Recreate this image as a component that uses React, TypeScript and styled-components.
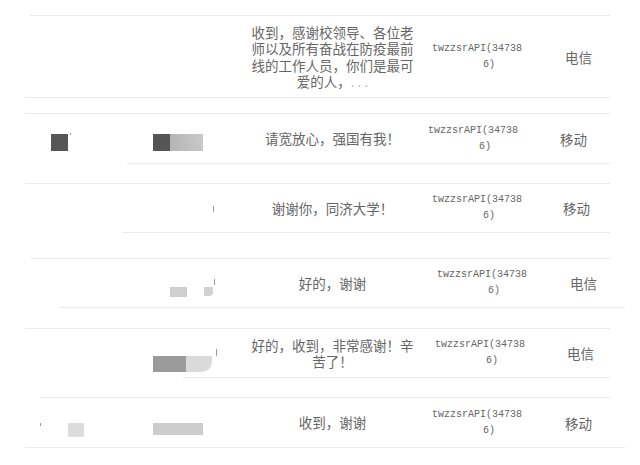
import React from 'react';
import styled, { createGlobalStyle } from 'styled-components';

const GlobalStyle = createGlobalStyle`
  html, body {
    margin: 0;
    padding: 0;
    background: #ffffff;
  }
  body {
    font-family: "Noto Sans CJK SC", "Noto Sans", sans-serif;
  }
`;

const Sheet = styled.div`
  width: 640px;
  height: 465px;
  padding-top: 15px;
  box-sizing: border-box;
  display: flex;
  flex-direction: column;
  overflow: hidden;
  background: #fff;
`;

const Rule = styled.div<{ $from: number; $to?: number }>`
  flex: none;
  height: 1px;
  background: #eaeaea;
  margin-left: ${p => p.$from}px;
  width: ${p => (p.$to ?? 610) - p.$from}px;
`;

const Gap = styled.div<{ $h: number }>`
  flex: none;
  height: ${p => p.$h}px;
`;

const Row = styled.div<{ $h: number }>`
  flex: none;
  height: ${p => p.$h}px;
  display: grid;
  grid-template-columns: 140px 100px 185px 120px 1fr;
  align-items: center;
`;

const MarkCell = styled.div<{ $pad: number }>`
  display: flex;
  align-items: center;
  padding-left: ${p => p.$pad}px;
  height: 100%;
`;

const Blot = styled.div<{ $w: number; $h: number; $bg: string; $dy?: number; $round?: number; $ml?: number }>`
  flex: none;
  width: ${p => p.$w}px;
  height: ${p => p.$h}px;
  background: ${p => p.$bg};
  margin-top: ${p => (p.$dy ?? 0) * 2}px;
  margin-left: ${p => p.$ml ?? 0}px;
  border-bottom-right-radius: ${p => p.$round ?? 0}px;
  filter: blur(0.4px);
`;

const Speck = styled.div<{ $dy: number; $ml: number; $h?: number }>`
  flex: none;
  width: 1px;
  height: ${p => p.$h ?? 4}px;
  background: #9a9a9a;
  margin-left: ${p => p.$ml}px;
  margin-top: ${p => p.$dy * 2}px;
`;

const Message = styled.div`
  justify-self: center;
  max-width: 170px;
  text-align: center;
  font-size: 13.5px;
  line-height: 16.5px;
  color: #666;
`;

const Dots = styled.span`
  color: #b0b0b0;
`;

// first line runs flush left, the wrapped "6)" sits centred a bit to the right
const Account = styled.div<{ $shift: number }>`
  margin-left: ${p => 7 + p.$shift}px;
  width: 70px;
  padding-left: 22px;
  text-indent: -22px;
  font-family: "Liberation Mono", monospace;
  font-size: 10px;
  line-height: 16px;
  color: #666;
  text-align: left;
  text-align-last: center;
  word-break: break-all;
`;

const Carrier = styled.div<{ $shift: number }>`
  padding-left: ${p => 20 + p.$shift}px;
  font-size: 13.5px;
  color: #666;
`;

type RowData = {
  h: number;
  msg: React.ReactNode;
  carrier: string;
  twShift: number;
  carShift: number;
  left?: React.ReactNode;
  mid?: React.ReactNode;
};

const rows: RowData[] = [
  {
    h: 81,
    msg: (
      <>
        收到，感谢校领导、各位老师以及所有奋战在防疫最前线的工作人员，你们是最可爱的人，<Dots>. . .</Dots>
      </>
    ),
    carrier: '电信',
    twShift: 0,
    carShift: 0,
  },
  {
    h: 49,
    msg: '请宽放心，强国有我！',
    carrier: '移动',
    twShift: -4,
    carShift: -5,
    left: (
      <MarkCell $pad={51}>
        <Blot $w={17} $h={17} $bg="#565656" $dy={4} />
        <Speck $ml={2} $dy={-5} $h={2} />
      </MarkCell>
    ),
    mid: (
      <MarkCell $pad={13}>
        <Blot $w={50} $h={17} $bg="linear-gradient(to right, #555 0 17px, #b4b4b4 17px, #c9c9c9 100%)" $dy={4} />
      </MarkCell>
    ),
  },
  {
    h: 48,
    msg: '谢谢你，同济大学！',
    carrier: '移动',
    twShift: 0,
    carShift: -2,
    mid: (
      <MarkCell $pad={73}>
        <Speck $ml={0} $dy={1} $h={6} />
      </MarkCell>
    ),
  },
  {
    h: 48,
    msg: '好的，谢谢',
    carrier: '电信',
    twShift: 5,
    carShift: 5,
    mid: (
      <MarkCell $pad={30}>
        <Blot $w={17} $h={10} $bg="#cfcfcf" $dy={9} />
        <Blot $w={9} $h={9} $bg="#d2d2d2" $dy={8} $ml={17} $round={4} />
        <Speck $ml={1} $dy={-1} $h={6} />
      </MarkCell>
    ),
  },
  {
    h: 48,
    msg: '好的，收到，非常感谢！辛苦了！',
    carrier: '电信',
    twShift: 3,
    carShift: 2,
    mid: (
      <MarkCell $pad={13}>
        <Blot $w={59} $h={16} $bg="linear-gradient(to right, #9b9b9b 0 33px, #dadada 33px)" $dy={11} $round={10} />
        <Speck $ml={4} $dy={-1} $h={7} />
      </MarkCell>
    ),
  },
  {
    h: 49,
    msg: '收到，谢谢',
    carrier: '移动',
    twShift: 0,
    carShift: 0,
    left: (
      <MarkCell $pad={40}>
        <Speck $ml={0} $dy={2} $h={3} />
        <Blot $w={16} $h={14} $bg="#dcdcdc" $dy={7} $ml={27} />
      </MarkCell>
    ),
    mid: (
      <MarkCell $pad={13}>
        <Blot $w={50} $h={12} $bg="#cdcdcd" $dy={6} />
      </MarkCell>
    ),
  },
];

const rulesAfter: { gap: number; bottom: [number, number?]; top: [number, number?] }[] = [
  { bottom: [25], gap: 15, top: [25] },
  { bottom: [127], gap: 19, top: [25] },
  { bottom: [122], gap: 25, top: [31] },
  { bottom: [60, 625], gap: 20, top: [25] },
  { bottom: [183], gap: 19, top: [40] },
  { bottom: [25, 625], gap: 0, top: [0] },
];

export default function App() {
  return (
    <>
      <GlobalStyle />
      <Sheet>
        <Rule $from={30} />
        {rows.map((r, i) => {
          const after = rulesAfter[i];
          const last = i === rows.length - 1;
          return (
            <React.Fragment key={i}>
              <Row $h={r.h}>
                {r.left ?? <div />}
                {r.mid ?? <div />}
                <Message>{r.msg}</Message>
                <Account $shift={r.twShift}>twzzsrAPI(347386)</Account>
                <Carrier $shift={r.carShift}>{r.carrier}</Carrier>
              </Row>
              <Rule $from={after.bottom[0]} $to={after.bottom[1]} />
              {!last && (
                <>
                  <Gap $h={after.gap} />
                  <Rule $from={after.top[0]} $to={after.top[1]} />
                </>
              )}
            </React.Fragment>
          );
        })}
      </Sheet>
    </>
  );
}
